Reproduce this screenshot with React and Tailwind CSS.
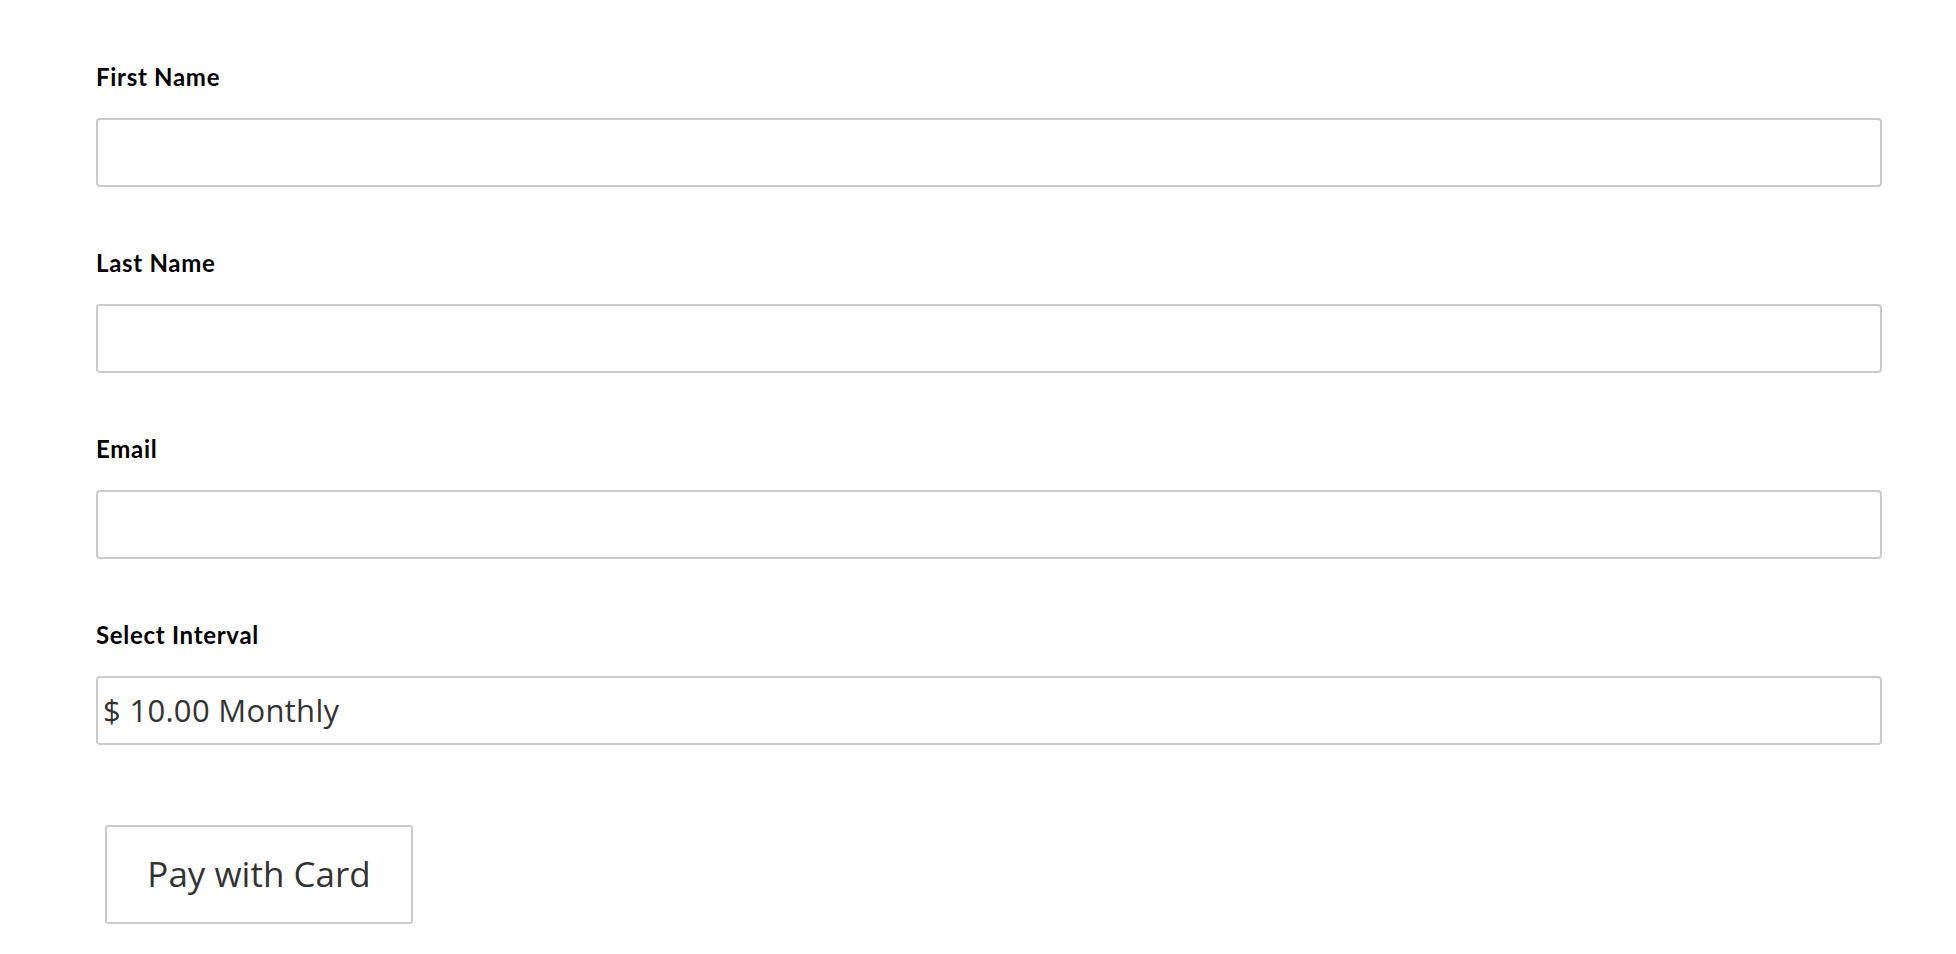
const FIELDS = ['First Name', 'Last Name', 'Email']

function Label({ children }) {
  return (
    <label className="block h-[37px] pt-[6px] text-[24px] leading-[30px] tracking-[0.7px] font-bold text-black font-['Lato',sans-serif]">
      {children}
    </label>
  )
}

export default function App() {
  return (
    <div className="min-h-[954px] bg-white pl-[96px] pr-[74px] pt-[56px]">
      {FIELDS.map((f) => (
        <div key={f} className="mb-[55px]">
          <Label>{f}</Label>
          <input
            type="text"
            className="mt-[25px] block h-[69px] w-full rounded-[4px] border-2 border-[#cbcbcb] bg-white px-2 outline-none"
          />
        </div>
      ))}

      <div className="mb-[80px]">
        <Label>Select Interval</Label>
        <div className="mt-[25px] flex h-[69px] w-full items-center rounded-[4px] border-2 border-[#cbcbcb] bg-white pl-[5px] text-[31px] tracking-[0.3px] text-[#333] font-['Open_Sans',sans-serif]">
          $ 10.00 Monthly
        </div>
      </div>

      <button
        type="button"
        className="ml-[9px] flex h-[99px] w-[308px] items-center justify-center rounded-[3px] border-2 border-[#cbcbcb] bg-white text-[35px] text-[#333] font-['Open_Sans',sans-serif]"
      >
        Pay with Card
      </button>
    </div>
  )
}
